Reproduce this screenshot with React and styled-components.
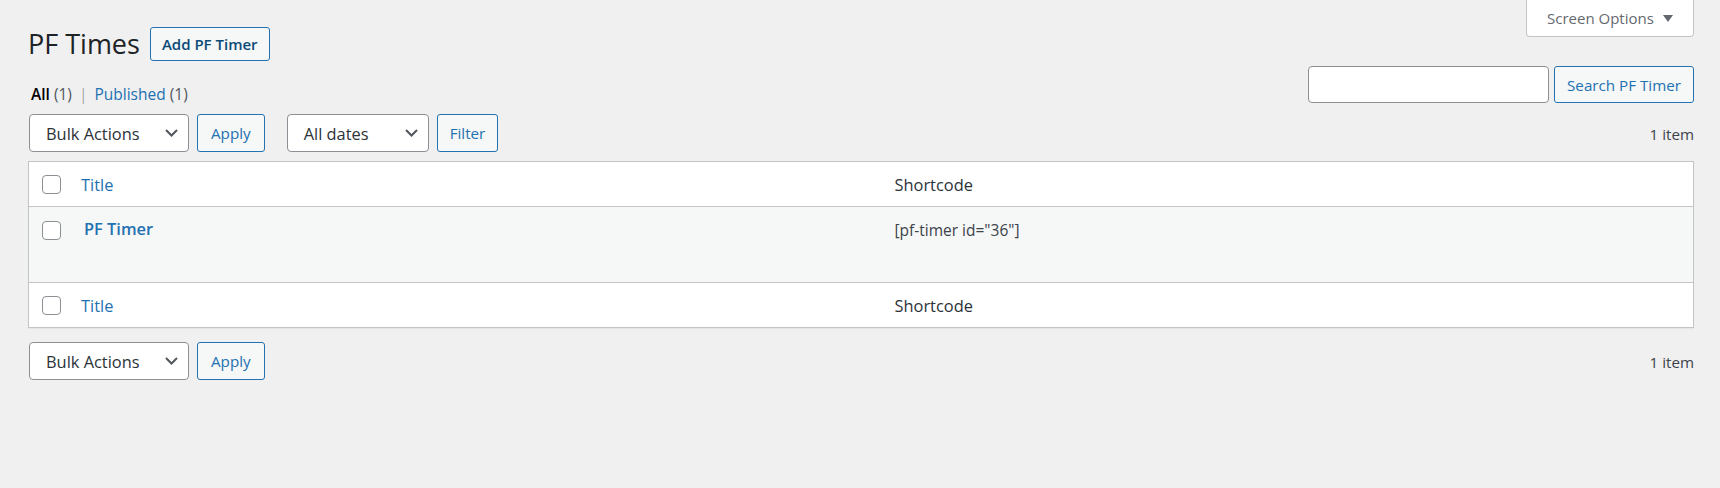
import React from 'react'
import styled, { createGlobalStyle } from 'styled-components'

const GlobalStyle = createGlobalStyle`
  body {
    margin: 0;
    background: #f0f0f1;
    font-family: "Open Sans", "Noto Sans", sans-serif;
    color: #3c434a;
  }
`

const Wrap = styled.div`
  padding: 0 26px 0 28px;
`

const Top = styled.div`
  display: flex;
  justify-content: space-between;
  align-items: flex-start;
`

const TitleCol = styled.div`
  padding-top: 27px;
`

const HeadingRow = styled.div`
  display: flex;
  align-items: center;
  height: 34px;
`

const Heading = styled.h1`
  margin: 0 10px 0 0;
  font-size: 27px;
  line-height: 34px;
  font-weight: 400;
  color: #1d2327;
`

const Button = styled.button`
  height: ${p => p.$h || 38}px;
  padding: 0 ${p => p.$pad || 12}px;
  margin-right: ${p => p.$after || 0}px;
  border: 1px solid #2271b1;
  border-radius: 3px;
  background: #f6f7f7;
  color: ${p => (p.$strong ? '#0a4b78' : '#2271b1')};
  font-family: inherit;
  font-size: ${p => p.$size || 15.2}px;
  font-weight: ${p => (p.$strong ? 600 : 400)};
  white-space: nowrap;
  cursor: pointer;
`

const Views = styled.ul`
  display: flex;
  margin: 22px 0 0;
  padding: 0 0 0 3px;
  list-style: none;
  font-size: 15.5px;
  line-height: 22px;
  color: #50575e;
  white-space: pre;
`

const ViewLink = styled.li`
  color: ${p => (p.$current ? '#000' : '#2271b1')};
  font-weight: ${p => (p.$current ? 600 : 400)};

  span {
    color: #50575e;
    font-weight: 400;
  }
`

const Sep = styled.li`
  margin: 0 7px;
  color: #a7aaad;
`

const RightCol = styled.div`
  display: flex;
  flex-direction: column;
  align-items: flex-end;
`

const ScreenTab = styled.div`
  display: flex;
  align-items: center;
  justify-content: space-between;
  height: 37px;
  box-sizing: border-box;
  width: 168px;
  padding: 0 20px;
  background: #fff;
  border: 1px solid #c3c4c7;
  border-top: 0;
  border-radius: 0 0 4px 4px;
  color: #646970;
  font-size: 15px;
  white-space: nowrap;
`

const SearchRow = styled.div`
  display: flex;
  gap: 5px;
  margin-top: 29px;
`

const SearchInput = styled.input`
  width: 241px;
  height: 37px;
  box-sizing: border-box;
  border: 1px solid #8c8f94;
  border-radius: 4px;
  background: #fff;
`

const TableNav = styled.div`
  display: flex;
  align-items: center;
  justify-content: space-between;
  height: 38px;
  margin-top: ${p => p.$top}px;
`

const NavGroup = styled.div`
  display: flex;
  align-items: center;
  gap: 8px;
  margin-left: 1px;
`

const Select = styled.div`
  display: flex;
  align-items: center;
  justify-content: space-between;
  width: ${p => p.$w}px;
  height: 38px;
  box-sizing: border-box;
  padding: 0 10px 0 16px;
  background: #fff;
  border: 1px solid #8c8f94;
  border-radius: 4px;
  color: #2c3338;
  font-size: 16.4px;
`

const Count = styled.span`
  font-size: 15.2px;
  color: #3c434a;
  padding-top: 2px;
`

const Table = styled.table`
  width: 100%;
  margin-top: 9px;
  border: 1px solid #c3c4c7;
  border-spacing: 0;
  table-layout: fixed;
  background: #fff;
  box-shadow: 0 1px 1px rgba(0, 0, 0, 0.04);
`

const HeadRow = styled.tr`
  & > * {
    height: 45px;
    box-sizing: border-box;
    border-bottom: ${p => (p.$foot ? 0 : 1)}px solid #c3c4c7;
    border-top: ${p => (p.$foot ? 1 : 0)}px solid #c3c4c7;
  }
`

const Th = styled.th`
  padding: 0 ${p => p.$pad || 12.5}px;
  text-align: left;
  font-weight: 400;
  font-size: 16.4px;
  color: ${p => (p.$link ? '#2271b1' : '#2c3338')};
  vertical-align: middle;
`

const CheckCell = styled.td`
  padding: ${p => (p.$body ? '14px 0 0 13px' : '0 0 0 13px')};
  vertical-align: ${p => (p.$body ? 'top' : 'middle')};
`

const Checkbox = styled.span`
  display: block;
  width: 19px;
  height: 19px;
  box-sizing: border-box;
  border: 1px solid #8c8f94;
  border-radius: 4px;
  background: #fff;
`

const BodyRow = styled.tr`
  background: #f6f7f7;

  & > * {
    height: 75px;
    box-sizing: border-box;
  }
`

const Td = styled.td`
  padding: ${p => p.$top}px 12.5px 0 ${p => p.$left || 12.5}px;
  vertical-align: top;
  font-size: ${p => p.$size || 15.5}px;
  line-height: 24px;
  color: #3c434a;
`

const RowTitle = styled.a`
  color: #2271b1;
  font-weight: 600;
  font-size: 16.4px;
  text-decoration: none;
`

const Chevron = () => (
  <svg width="13" height="8" viewBox="0 0 13 8">
    <path d="M1 1l5.5 5.5L12 1" fill="none" stroke="#50575e" strokeWidth="2" />
  </svg>
)

const Arrow = () => (
  <svg width="10" height="7" viewBox="0 0 10 7">
    <path d="M0 0h10L5 7z" fill="#646970" />
  </svg>
)

const columns = ['Title', 'Shortcode']

const Header = ({ foot }) => (
  <HeadRow $foot={foot}>
    <CheckCell>
      <Checkbox />
    </CheckCell>
    <Th $link $pad={10}>
      {columns[0]}
    </Th>
    <Th>{columns[1]}</Th>
  </HeadRow>
)

export default function App() {
  return (
    <Wrap>
      <GlobalStyle />
      <Top>
        <TitleCol>
          <HeadingRow>
            <Heading>PF Times</Heading>
            <Button $h={34} $pad={11} $size={15} $strong>
              Add PF Timer
            </Button>
          </HeadingRow>
          <Views>
            <ViewLink $current>
              All <span>(1)</span>
            </ViewLink>
            <Sep>|</Sep>
            <ViewLink>
              Published <span>(1)</span>
            </ViewLink>
          </Views>
        </TitleCol>
        <RightCol>
          <ScreenTab>
            Screen Options <Arrow />
          </ScreenTab>
          <SearchRow>
            <SearchInput type="search" />
            <Button $h={37} $pad={12}>
              Search PF Timer
            </Button>
          </SearchRow>
        </RightCol>
      </Top>

      <TableNav $top={9}>
        <NavGroup>
          <Select $w={160}>
            Bulk Actions <Chevron />
          </Select>
          <Button $pad={13} $after={14}>
            Apply
          </Button>
          <Select $w={142}>
            All dates <Chevron />
          </Select>
          <Button>Filter</Button>
        </NavGroup>
        <Count>1 item</Count>
      </TableNav>

      <Table>
        <colgroup>
          <col style={{ width: 42 }} />
          <col />
          <col />
        </colgroup>
        <thead>
          <Header />
        </thead>
        <tbody>
          <BodyRow>
            <CheckCell $body>
              <Checkbox />
            </CheckCell>
            <Td $top={10} $left={13}>
              <RowTitle href="#">PF Timer</RowTitle>
            </Td>
            <Td $top={11}>[pf-timer id="36"]</Td>
          </BodyRow>
        </tbody>
        <tfoot>
          <Header foot />
        </tfoot>
      </Table>

      <TableNav $top={14}>
        <NavGroup>
          <Select $w={160}>
            Bulk Actions <Chevron />
          </Select>
          <Button $pad={13}>Apply</Button>
        </NavGroup>
        <Count>1 item</Count>
      </TableNav>
    </Wrap>
  )
}
